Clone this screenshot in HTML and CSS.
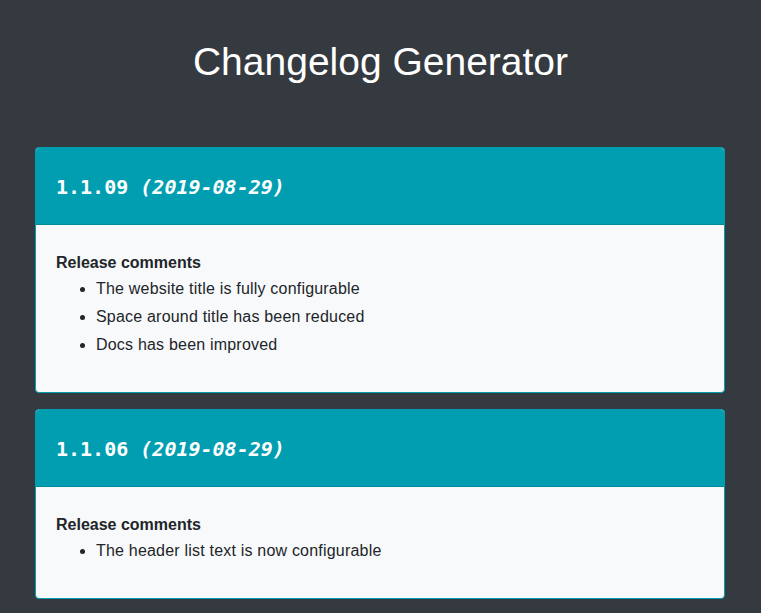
FILE: index.html
```html
<!DOCTYPE html>
<html lang="en">
<head>
<meta charset="utf-8">
<title>Changelog Generator</title>
<link rel="stylesheet" href="styles.css">
</head>
<body>
<header class="page-header">
  <h1 class="page-title">Changelog Generator</h1>
</header>
<main class="releases">
  <section class="card">
    <div class="card-header"><span class="version">1.1.09</span> <em class="date">(2019-08-29)</em></div>
    <div class="card-body">
      <div class="comments-title">Release comments</div>
      <ul class="comments">
        <li>The website title is fully configurable</li>
        <li>Space around title has been reduced</li>
        <li>Docs has been improved</li>
      </ul>
    </div>
  </section>
  <section class="card">
    <div class="card-header"><span class="version">1.1.06</span> <em class="date">(2019-08-29)</em></div>
    <div class="card-body">
      <div class="comments-title">Release comments</div>
      <ul class="comments">
        <li>The header list text is now configurable</li>
      </ul>
    </div>
  </section>
</main>
</body>
</html>
```
FILE: styles.css
```css
html, body {
  margin: 0;
  padding: 0;
}
body {
  background: #343a40;
  font-family: "Liberation Sans", Arial, sans-serif;
  color: #212529;
  font-size: 16px;
  line-height: 1.5;
}
.page-header {
  padding: 38px 0 0;
  height: 147px;
  box-sizing: border-box;
}
.page-title {
  margin: 0;
  text-align: center;
  color: #ffffff;
  font-weight: 400;
  font-size: 39px;
  line-height: 48px;
}
.releases {
  display: flex;
  flex-direction: column;
  gap: 16px;
  padding: 0 36px 0 35px;
}
.card {
  border: 1px solid #009eb0;
  border-radius: 4px;
  overflow: hidden;
  background: #f8f9fa;
}
.card-header {
  background: #009eb0;
  color: #ffffff;
  font-family: "DejaVu Sans Mono", monospace;
  font-size: 20px;
  line-height: 24px;
  padding: 27px 20px 25px;
  border-bottom: 1px solid #008c9c;
}
.version {
  font-weight: 700;
}
.date {
  font-style: italic;
  font-weight: 700;
}
.card-body {
  padding: 26px 20px 33px;
}
.comments-title {
  font-weight: 700;
  line-height: 24px;
}
.comments {
  margin: 0;
  padding-left: 40px;
}
.comments li {
  padding: 2px 0;
  line-height: 24px;
  letter-spacing: 0.2px;
}
```
